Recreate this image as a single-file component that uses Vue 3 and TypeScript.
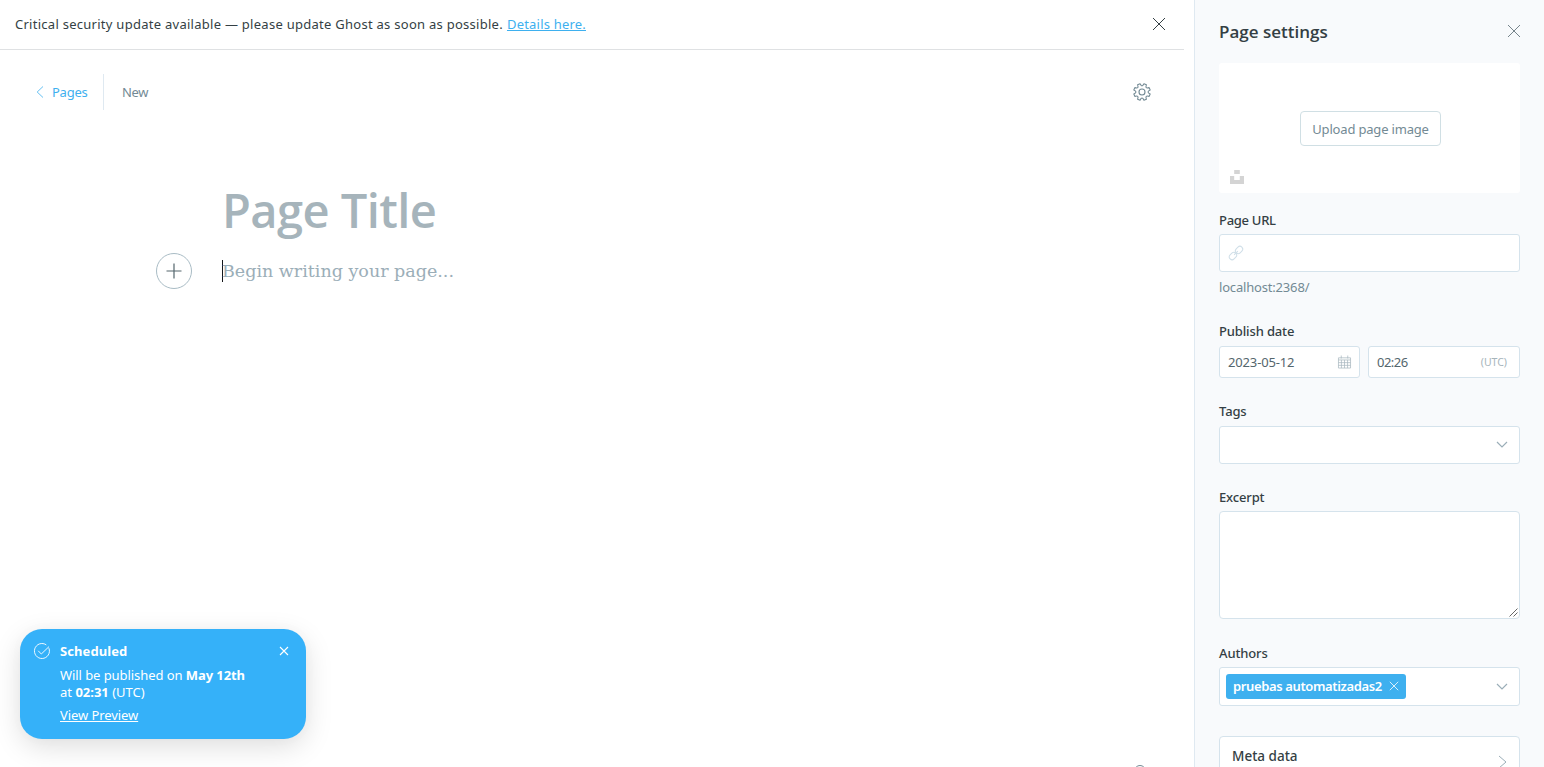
<script setup lang="ts">
import { ref } from 'vue'

const author = ref('pruebas automatizadas2')
const publishDate = ref('2023-05-12')
const publishTime = ref('02:26')
const excerpt = ref('')

// Eight rounded teeth, with a notch at every multiple of 45 degrees.
function gearPath(cx: number, cy: number): string {
  const at = (deg: number, r: number): string => {
    const a = (deg * Math.PI) / 180
    return `${(cx + r * Math.cos(a)).toFixed(2)} ${(cy + r * Math.sin(a)).toFixed(2)}`
  }
  let d = ''
  for (let k = 0; k < 8; k++) {
    const mid = k * 45 + 22.5
    d += `${k === 0 ? 'M' : 'L'}${at(mid - 9, 8.4)}L${at(mid + 9, 8.4)}Q${at(mid + 22.5, 3.9)} ${at(mid + 36, 8.4)}`
  }
  return d + 'Z'
}
const gear = gearPath(9, 9)
</script>

<template>
  <div class="screen">
    <main class="main">
      <aside class="banner">
        <p class="banner-text"><span class="banner-msg">Critical security update available — please update Ghost as soon as possible.</span><a class="banner-link">Details here.</a></p>
        <svg class="banner-close" viewBox="0 0 14 14"><path d="M1 1L13 13M13 1L1 13" /></svg>
      </aside>

      <header class="toolbar">
        <a class="back">
          <svg class="chev-left" viewBox="0 0 8 12"><path d="M7 .5L1.2 6L7 11.5" /></svg>
          <span class="back-text">Pages</span>
        </a>
        <span class="status">New</span>
        <svg class="gear" viewBox="0 0 18 18">
          <path :d="gear" />
          <circle cx="9" cy="9" r="3" />
        </svg>
      </header>

      <section class="editor">
        <h1 class="title">Page Title</h1>
        <div class="body-row">
          <button class="plus" type="button">
            <svg viewBox="0 0 16 16"><path d="M8 .5V15.5M.5 8H15.5" /></svg>
          </button>
          <p class="placeholder">Begin writing your page...</p>
        </div>
      </section>

      <div class="help" />

      <div class="toast">
        <svg class="toast-check" viewBox="0 0 16 16">
          <path d="M14.9 5.2A7.5 7.5 0 1 1 12.3 1.9" /><path d="M4.2 7.8L7.3 11L15 3.6" />
        </svg>
        <div class="toast-content">
          <h2 class="toast-title">Scheduled</h2>
          <p class="toast-text"><span class="line1">Will be published on <b>May 12th</b></span><br><span class="line2">at <b>02:31</b> (UTC)</span></p>
          <a class="toast-link">View Preview</a>
        </div>
        <svg class="toast-close" viewBox="0 0 10 10"><path d="M1 1L9 9M9 1L1 9" /></svg>
      </div>
    </main>

    <aside class="settings">
      <header class="settings-head">
        <h3 class="settings-title">Page settings</h3>
        <svg class="settings-close" viewBox="0 0 14 14"><path d="M1 1L13 13M13 1L1 13" /></svg>
      </header>

      <div class="upload">
        <button class="upload-btn" type="button"><span>Upload page image</span></button>
        <svg class="unsplash" viewBox="0 0 14 14"><path d="M4.2 0H9.8V4H4.2ZM0 6H4.2V10H9.8V6H14V14H0Z" /></svg>
      </div>

      <div class="group url">
        <label class="label l-url">Page URL</label>
        <div class="field tall">
          <svg class="link" viewBox="0 0 14 14">
            <g transform="rotate(-45 7 7)"><rect x="-1.3" y="4.2" width="8" height="5.6" rx="2.8" /><rect x="7.3" y="4.2" width="8" height="5.6" rx="2.8" /><path d="M4.3 7H9.7" /></g>
          </svg>
        </div>
        <p class="hint">localhost:2368/</p>
      </div>

      <div class="group date">
        <label class="label l-date">Publish date</label>
        <div class="date-row">
          <div class="field short day">
            <span class="value v-date">{{ publishDate }}</span>
            <svg class="calendar" viewBox="0 0 14 14">
              <path d="M.5 2.5H13.5V13.5H.5ZM.5 4.8H13.5M.5 7.7H13.5M.5 10.6H13.5M3.7 4.8V13.5M7 4.8V13.5M10.3 4.8V13.5M3.5 0V3.2M10.5 0V3.2" />
            </svg>
          </div>
          <div class="field short time">
            <span class="value v-time">{{ publishTime }}</span>
            <span class="zone">(UTC)</span>
          </div>
        </div>
      </div>

      <div class="group tags">
        <label class="label l-tags">Tags</label>
        <div class="field tall tags-field">
          <svg class="chev-down" viewBox="0 0 12 7"><path d="M1 1L6 6L11 1" /></svg>
        </div>
      </div>

      <div class="group excerpt">
        <label class="label l-excerpt">Excerpt</label>
        <div class="area">{{ excerpt }}
          <svg class="grip" viewBox="0 0 9 9"><path d="M.5 8.5L8.5 .5M4.5 8.5L8.5 4.5" /></svg>
        </div>
      </div>

      <div class="group authors">
        <label class="label l-authors">Authors</label>
        <div class="field authors-field">
          <span class="token"><span class="token-text">{{ author }}</span>
            <svg viewBox="0 0 10 10"><path d="M.8 .8L9.2 9.2M9.2 .8L.8 9.2" /></svg>
          </span>
          <svg class="chev-down" viewBox="0 0 12 7"><path d="M1 1L6 6L11 1" /></svg>
        </div>
      </div>

      <div class="meta">
        <span class="meta-text">Meta data</span>
        <svg class="chev-right" viewBox="0 0 9 14"><path d="M1 1L8 7L1 13" /></svg>
      </div>
    </aside>
  </div>
</template>

<style>
body { margin: 0; overflow: hidden; }
</style>

<style scoped>
* { box-sizing: border-box; }
h1, h2, h3, p { margin: 0; }
svg { display: block; fill: none; flex: none; overflow: visible; }
button { padding: 0; font: inherit; background: #fff; }
.screen {
  display: flex;
  width: 1544px;
  height: 767px;
  overflow: hidden;
  background: #fff;
  color: #394047;
  font-family: "Noto Sans", "Open Sans", sans-serif;
  font-size: 13px;
  white-space: nowrap;
}
.main { position: relative; width: 1194px; height: 767px; flex: none; overflow: hidden; }

.banner {
  display: flex;
  align-items: center;
  justify-content: space-between;
  width: 1184px;
  height: 50px;
  padding: 0 18px 2px 15px;
  border-bottom: 1px solid #dfe1e3;
}
.banner-text { display: flex; gap: 4px; line-height: 20px; color: #343f44; }
.banner-msg { letter-spacing: .27px; }
.banner-link { color: #3eb0ef; text-decoration: underline; letter-spacing: .2px; }
.banner-close { width: 14px; height: 14px; stroke: #343f44; }

.toolbar { display: flex; align-items: center; height: 36px; margin: 24px 44px 0 36px; color: #738a94; }
.back { display: flex; align-items: center; gap: 8px; width: 68px; height: 36px; border-right: 1px solid #dfe9f1; color: #3eb0ef; }
.back-text { letter-spacing: -.25px; }
.chev-left { width: 8px; height: 12px; stroke: #3eb0ef; stroke-width: .8; }
.status { margin-left: 18px; letter-spacing: -.35px; color: #738a94; }
.gear { width: 18px; height: 18px; margin-left: auto; margin-right: -1px; stroke: #738a94; stroke-width: 1.1; stroke-linejoin: round; }

.editor { padding: 70px 0 0 156px; }
.title { height: 60px; margin-left: 66px; font: 600 47px/60px "Open Sans", "Noto Sans", sans-serif; letter-spacing: -.57px; color: #a6b4bb; }
.body-row { display: flex; align-items: center; height: 36px; margin-top: 13px; }
.plus { display: flex; align-items: center; justify-content: center; width: 36px; height: 36px; border: 1px solid #a9bcc5; border-radius: 50%; }
.plus svg { width: 16px; height: 16px; stroke: #54666d; stroke-width: 1.2; }
.placeholder { height: 22px; margin-left: 30px; border-left: 1px solid #15171a; font: 17.5px/23px "DejaVu Serif", "Liberation Serif", serif; text-indent: -1px; color: #9baeb8; }
.help { position: absolute; left: 1134px; top: 765px; width: 12px; height: 12px; border: 1px solid #738a94; border-radius: 50%; }

.toast {
  position: absolute;
  left: 20px;
  top: 629px;
  display: flex;
  width: 286px;
  height: 110px;
  padding: 14px 17px 0 14px;
  border-radius: 22px;
  background: #35b1f9;
  color: #fff;
  box-shadow: 0 8px 28px rgba(0, 0, 0, .13), 0 0 16px rgba(0, 0, 0, .02);
}
.toast-check { width: 16px; height: 16px; stroke: #fff; stroke-width: .9; }
.toast-content { flex: 1; margin-left: 10px; }
.toast-title { font-size: 13px; line-height: 17px; font-weight: 700; letter-spacing: .08px; }
.toast-text { margin-top: 7px; line-height: 17px; }
.line1 { letter-spacing: -.07px; }
.toast-link { display: block; width: max-content; margin-top: 6px; line-height: 17px; letter-spacing: -.08px; text-decoration: underline; }
.toast-close { width: 10px; height: 10px; margin-top: 3px; stroke: #fff; stroke-width: 1.1; }

.settings { width: 350px; height: 767px; padding: 0 24px; border-left: 1px solid #dfe9f1; background: #f8fafc; flex: none; overflow: hidden; }
.settings-head { display: flex; align-items: center; justify-content: space-between; height: 63px; }
.settings-title { font: 600 17px/24px "Open Sans", sans-serif; color: #343f44; }
.settings-close { width: 14px; height: 14px; margin-right: -1px; margin-bottom: 1px; stroke: #54666d; stroke-width: .8; }
.upload { position: relative; display: flex; align-items: center; justify-content: center; height: 130px; border-radius: 3px; background: #fff; }
.upload-btn { width: 141px; height: 35px; margin-left: 2px; margin-top: 1px; border: 1px solid #d0dfe4; border-radius: 4px; letter-spacing: -.18px; color: #738a94; }
.unsplash { position: absolute; left: 11px; bottom: 9px; width: 14px; height: 14px; fill: #d4d4d4; }
.group { display: flex; flex-direction: column; }
.label { height: 18px; margin-bottom: 5px; line-height: 18px; font-weight: 500; letter-spacing: -.14px; color: #343f44; }
.l-url { letter-spacing: -.28px; }
.field { display: flex; align-items: center; border: 1px solid #d5e3ec; border-radius: 3px; background: #fff; }
.tall { height: 38px; }
.short { height: 32px; padding: 0 8px; justify-content: space-between; }
.url { margin-top: 18px; }
.link { width: 14px; height: 14px; margin-left: 9px; stroke: #d0dfe8; }
.hint { height: 18px; margin-top: 6px; line-height: 18px; letter-spacing: -.18px; color: #738a94; }
.date { margin-top: 26px; }
.date .label, .tags .label { margin-bottom: 6px; }
.date-row { display: flex; gap: 8px; }
.day { width: 141px; }
.time { width: 152px; padding-right: 12px; }
.value { color: #54666d; }
.v-date { letter-spacing: -.15px; }
.v-time { letter-spacing: -.5px; }
.zone { font-size: 10.5px; color: #a6b4bb; }
.calendar { width: 13px; height: 14px; stroke: #a9b8bf; stroke-width: .8; }
.tags { margin-top: 24px; }
.tags-field { padding-bottom: 2px; }
.chev-down { width: 12px; height: 7px; margin-left: auto; margin-right: 11px; stroke: #9baeb8; stroke-width: 1.2; }
.excerpt { margin-top: 24px; }
.area { display: flex; align-items: flex-end; justify-content: flex-end; height: 108px; padding: 1px; border: 1px solid #d5e3ec; border-radius: 4px; background: #fff; }
.grip { width: 9px; height: 9px; stroke: #555; stroke-width: .9; }
.authors { margin-top: 25px; }
.authors-field { height: 39px; padding-left: 6px; }
.token { display: flex; align-items: center; justify-content: space-between; width: 180px; height: 25px; padding: 0 7px 1px; border-radius: 3px; background: #3eb0ef; color: #fff; }
.token-text { font-weight: 600; letter-spacing: -.37px; }
.token svg { width: 10px; height: 10px; stroke: #fff; stroke-width: .8; }
.meta { display: flex; justify-content: space-between; height: 76px; margin-top: 30px; padding: 10px 12px; border: 1px solid #d5e3ec; border-radius: 4px; background: #fff; }
.meta-text { font-size: 13.5px; line-height: 19px; font-weight: 500; color: #343f44; }
.chev-right { width: 9px; height: 14px; margin-top: 8px; stroke: #9baeb8; }
</style>
